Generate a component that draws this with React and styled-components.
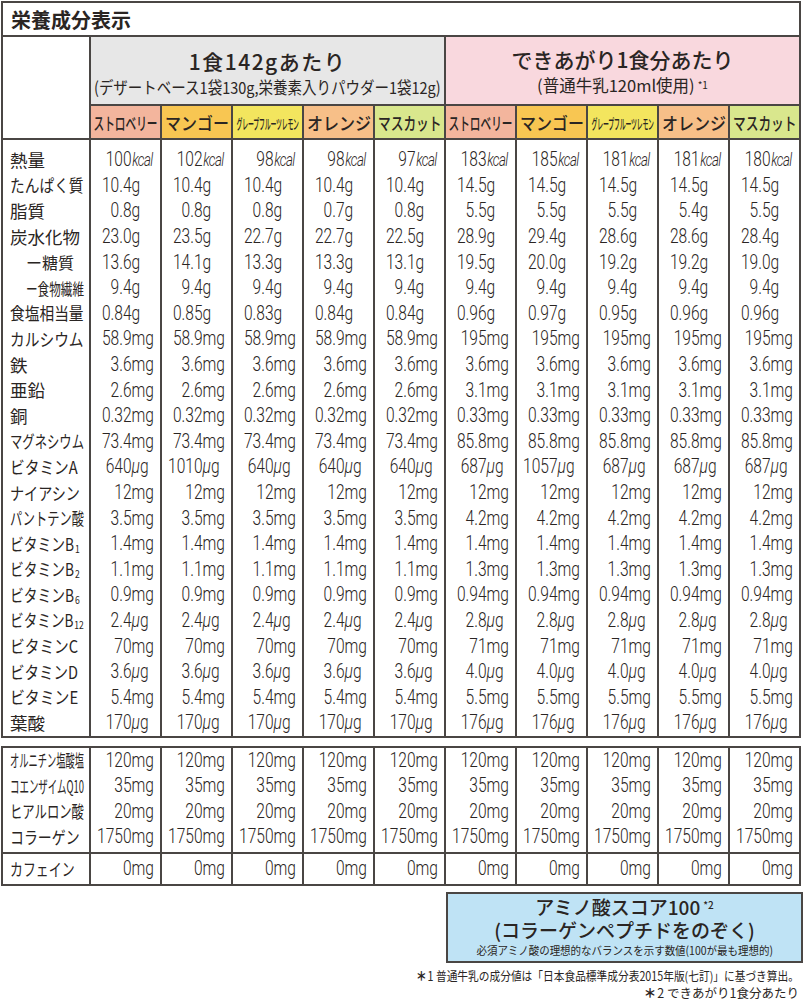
import React, { useLayoutEffect, useRef, useState } from 'react';
import styled, { createGlobalStyle } from 'styled-components';

const LINE = '#4a4644';
const INK = '#2a2523';
const FONT = `"Noto Sans CJK JP", "Noto Sans", sans-serif`;
const NUM_FONT = `Roboto, "Noto Sans", sans-serif`;

const GlobalStyle = createGlobalStyle`
  html, body { margin: 0; background: #fff; }
  body { font-family: ${FONT}; color: ${INK}; }
`;

// scale a piece of text down so it fits a given width
function Fit({ max, origin = 'left', children }) {
  const ref = useRef(null);
  const [scale, setScale] = useState(1);
  useLayoutEffect(() => {
    const measure = () => {
      const w = ref.current ? ref.current.offsetWidth : 0;
      setScale(w > max ? max / w : 1);
    };
    measure();
    if (document.fonts) document.fonts.ready.then(measure);
  }, [max]);
  return (
    <FitBox ref={ref} $origin={origin} style={{ transform: `scaleX(${scale})` }}>
      {children}
    </FitBox>
  );
}

const rep = (a, b) => [...Array(5).fill(a), ...Array(5).fill(b)];

const flavors = [
  { name: 'ストロベリー', color: '#f3b59d' },
  { name: 'マンゴー', color: '#f8c652' },
  { name: 'グレープフルーツレモン', color: '#f3e55e', small: true },
  { name: 'オレンジ', color: '#f7bf88' },
  { name: 'マスカット', color: '#d9e78d' },
];

const mainRows = [
  { label: '熱量', unit: 'kcal', v: ['100', '102', '98', '98', '97', '183', '185', '181', '181', '180'] },
  { label: 'たんぱく質', unit: 'g', v: rep('10.4', '14.5') },
  { label: '脂質', unit: 'g', v: ['0.8', '0.8', '0.8', '0.7', '0.8', '5.5', '5.5', '5.5', '5.4', '5.5'] },
  { label: '炭水化物', unit: 'g', v: ['23.0', '23.5', '22.7', '22.7', '22.5', '28.9', '29.4', '28.6', '28.6', '28.4'] },
  { label: 'ー糖質', indent: true, unit: 'g', v: ['13.6', '14.1', '13.3', '13.3', '13.1', '19.5', '20.0', '19.2', '19.2', '19.0'] },
  { label: 'ー食物繊維', indent: true, unit: 'g', v: rep('9.4', '9.4') },
  { label: '食塩相当量', unit: 'g', v: ['0.84', '0.85', '0.83', '0.84', '0.84', '0.96', '0.97', '0.95', '0.96', '0.96'] },
  { label: 'カルシウム', unit: 'mg', v: rep('58.9', '195') },
  { label: '鉄', unit: 'mg', v: rep('3.6', '3.6') },
  { label: '亜鉛', unit: 'mg', v: rep('2.6', '3.1') },
  { label: '銅', unit: 'mg', v: rep('0.32', '0.33') },
  { label: 'マグネシウム', unit: 'mg', v: rep('73.4', '85.8') },
  { label: 'ビタミンA', unit: 'ug', w: 68, v: ['640', '1010', '640', '640', '640', '687', '1057', '687', '687', '687'] },
  { label: 'ナイアシン', unit: 'mg', w: 70, v: rep('12', '12') },
  { label: 'パントテン酸', unit: 'mg', v: rep('3.5', '4.2') },
  { label: 'ビタミンB', sub: '1', unit: 'mg', w: 70, v: rep('1.4', '1.4') },
  { label: 'ビタミンB', sub: '2', unit: 'mg', w: 70, v: rep('1.1', '1.3') },
  { label: 'ビタミンB', sub: '6', unit: 'mg', w: 70, v: rep('0.9', '0.94') },
  { label: 'ビタミンB', sub: '12', unit: 'ug', w: 74, v: rep('2.4', '2.8') },
  { label: 'ビタミンC', unit: 'mg', w: 68, v: rep('70', '71') },
  { label: 'ビタミンD', unit: 'ug', w: 68, v: rep('3.6', '4.0') },
  { label: 'ビタミンE', unit: 'mg', w: 68, v: rep('5.4', '5.5') },
  { label: '葉酸', unit: 'ug', v: rep('170', '176') },
];

const extraRows = [
  { label: 'オルニチン塩酸塩', unit: 'mg', v: rep('120', '120') },
  { label: 'コエンザイムQ10', unit: 'mg', v: rep('35', '35') },
  { label: 'ヒアルロン酸', unit: 'mg', v: rep('20', '20') },
  { label: 'コラーゲン', unit: 'mg', w: 70, v: rep('1750', '1750') },
];

const caffeineRows = [{ label: 'カフェイン', unit: 'mg', w: 65, v: rep('0', '0') }];

function UnitText({ unit }) {
  if (unit === 'kcal') return <Kcal>kcal</Kcal>;
  if (unit === 'ug') return <Unit><Mu>μ</Mu>g</Unit>;
  return <Unit>{unit}</Unit>;
}

function Block({ rows, rowH, pt, pb, top }) {
  return (
    <Section $top={top}>
      <LabelColumn $pt={pt} $pb={pb}>
        {rows.map((r, i) => (
          <LabelCell key={i} $h={rowH} $indent={r.indent}>
            <Fit max={r.w || (r.indent ? 58 : 74)}>
              <LabelText $indent={r.indent}>
                {r.label}
                {r.sub && <Sub>{r.sub}</Sub>}
              </LabelText>
            </Fit>
          </LabelCell>
        ))}
      </LabelColumn>
      {Array.from({ length: 10 }, (_, c) => (
        <ValueColumn key={c} $pt={pt} $pb={pb}>
          {rows.map((r, i) => (
            <ValueCell key={i} $h={rowH}>
              <ValueText>
                <Num>{r.v[c]}</Num>
                <UnitText unit={r.unit} />
              </ValueText>
            </ValueCell>
          ))}
        </ValueColumn>
      ))}
    </Section>
  );
}

function FlavorStrip() {
  return (
    <FlavorRow>
      {flavors.map((f) => (
        <FlavorCell key={f.name} $bg={f.color}>
          <Fit max={f.small ? 62 : 64} origin="center">
            <FlavorText $small={f.small}>{f.name}</FlavorText>
          </Fit>
        </FlavorCell>
      ))}
    </FlavorRow>
  );
}

export default function App() {
  return (
    <Page>
      <GlobalStyle />
      <Frame>
        <TitleBar>栄養成分表示</TitleBar>
        <HeaderRow>
          <Corner />
          <Group>
            <GroupTitle $bg="#e7e7e7" $pt={10}>
              <GroupMain $spacing={1.5}>1食142gあたり</GroupMain>
              <GroupSub>
                <Fit max={347} origin="center">
                  (デザートベース1袋130g,栄養素入りパウダー1袋12g)
                </Fit>
              </GroupSub>
            </GroupTitle>
            <FlavorStrip />
          </Group>
          <Group>
            <GroupTitle $bg="#f9d8de" $pt={8}>
              <GroupMain $spacing={0}>できあがり1食分あたり</GroupMain>
              <GroupSub>
                (普通牛乳120ml使用)<Star $lift={3}>*1</Star>
              </GroupSub>
            </GroupTitle>
            <FlavorStrip />
          </Group>
        </HeaderRow>
        <Block rows={mainRows} rowH={25.6} pt={7} pb={0} />
      </Frame>
      <Frame $gap>
        <Block rows={extraRows} rowH={25.5} pt={0} pb={2} />
        <Block rows={caffeineRows} rowH={30} pt={0} pb={0} top />
      </Frame>
      <AminoBox>
        <AminoMain>
          アミノ酸スコア100<Star $lift={6}>*2</Star>
        </AminoMain>
        <AminoMain>(コラーゲンペプチドをのぞく)</AminoMain>
        <AminoNote>
          <Fit max={296} origin="center">
            必須アミノ酸の理想的なバランスを示す数値(100が最も理想的)
          </Fit>
        </AminoNote>
      </AminoBox>
      <Notes>
        <NoteLine>
          <Fit max={383} origin="right">
            <Mark>＊</Mark>1 普通牛乳の成分値は「日本食品標準成分表2015年版(七訂)」に基づき算出。
          </Fit>
        </NoteLine>
        <NoteLine>
          <Mark>＊</Mark>2 できあがり1食分あたり
        </NoteLine>
      </Notes>
    </Page>
  );
}

const FitBox = styled.span`
  display: inline-block;
  white-space: nowrap;
  flex-shrink: 0;
  transform-origin: ${({ $origin }) => $origin} center;
`;

const Page = styled.div`
  width: 803px;
  box-sizing: border-box;
  padding: 1px 0 0 1px;
`;

const Frame = styled.div`
  width: 800px;
  box-sizing: border-box;
  border: 2px solid ${LINE};
  margin-top: ${({ $gap }) => ($gap ? '8px' : '0')};
`;

const TitleBar = styled.div`
  height: 32px;
  display: flex;
  align-items: center;
  padding-left: 8px;
  border-bottom: 2px solid ${LINE};
  font-size: 20px;
  font-weight: 700;
`;

const HeaderRow = styled.div`
  display: flex;
  border-bottom: 2px solid ${LINE};
`;

const Corner = styled.div`
  width: 86px;
  flex-shrink: 0;
`;

const Group = styled.div`
  width: 355px;
  display: flex;
  flex-direction: column;
`;

const GroupTitle = styled.div`
  height: 67px;
  box-sizing: border-box;
  padding-top: ${({ $pt }) => $pt}px;
  border-left: 2px solid ${LINE};
  background: ${({ $bg }) => $bg};
  display: flex;
  flex-direction: column;
  align-items: center;
`;

const GroupMain = styled.div`
  font-size: 21px;
  font-weight: 500;
  line-height: 28px;
  letter-spacing: ${({ $spacing }) => $spacing}px;
`;

const GroupSub = styled.div`
  font-size: 16.5px;
  line-height: 24px;
  display: flex;
  justify-content: center;
  align-items: baseline;
  width: 100%;
`;

const Star = styled.span`
  font-size: 10px;
  line-height: 1;
  position: relative;
  top: -${({ $lift }) => $lift}px;
  margin-left: 3px;
`;

const FlavorRow = styled.div`
  display: flex;
  border-top: 2px solid ${LINE};
`;

const FlavorCell = styled.div`
  width: 71px;
  height: 32px;
  box-sizing: border-box;
  border-left: 2px solid ${LINE};
  background: ${({ $bg }) => $bg};
  display: flex;
  align-items: center;
  justify-content: center;
  overflow: hidden;
`;

const FlavorText = styled.span`
  font-size: ${({ $small }) => ($small ? '14px' : '17.5px')};
  font-weight: 500;
  letter-spacing: ${({ $small }) => ($small ? '-0.5px' : '0')};
`;

const Section = styled.div`
  display: flex;
  border-top: ${({ $top }) => ($top ? `2px solid ${LINE}` : 'none')};
`;

const LabelColumn = styled.div`
  width: 86px;
  flex-shrink: 0;
  box-sizing: border-box;
  padding: ${({ $pt }) => $pt}px 0 ${({ $pb }) => $pb}px;
`;

const LabelCell = styled.div`
  height: ${({ $h }) => $h}px;
  display: flex;
  align-items: center;
  padding-left: ${({ $indent }) => ($indent ? '23px' : '7px')};
`;

const LabelText = styled.span`
  font-size: ${({ $indent }) => ($indent ? '16px' : '17.5px')};
  line-height: 1;
`;

const Sub = styled.span`
  font-size: 11px;
  vertical-align: -2px;
  margin-left: 1px;
`;

const ValueColumn = styled.div`
  width: 71px;
  flex-shrink: 0;
  box-sizing: border-box;
  border-left: 2px solid ${LINE};
  padding: ${({ $pt }) => $pt}px 0 ${({ $pb }) => $pb}px;
`;

const ValueCell = styled.div`
  height: ${({ $h }) => $h}px;
  display: flex;
  align-items: center;
  padding-left: 5px;
`;

const ValueText = styled.span`
  display: inline-flex;
  align-items: baseline;
  white-space: nowrap;
  font-family: ${NUM_FONT};
  font-size: 21px;
  font-weight: 300;
  line-height: 1;
  transform: scaleX(0.74);
  transform-origin: left center;
`;

const Num = styled.span`
  width: 48px;
  flex-shrink: 0;
  text-align: right;
`;

const Unit = styled.span``;

const Mu = styled.span`
  font-style: italic;
`;

const Kcal = styled.span`
  font-style: italic;
  font-size: 18px;
  letter-spacing: -0.8px;
  margin-left: 1px;
`;

const AminoBox = styled.div`
  width: 357px;
  height: 71px;
  box-sizing: border-box;
  margin: 6px 0 0 auto;
  border: 2px solid ${LINE};
  background: #bfe3f5;
  display: flex;
  flex-direction: column;
  align-items: center;
  justify-content: center;
`;

const AminoMain = styled.div`
  font-size: 19px;
  font-weight: 500;
  line-height: 23px;
`;

const AminoNote = styled.div`
  font-size: 11.5px;
  line-height: 19px;
  display: flex;
  justify-content: center;
  width: 100%;
`;

const Notes = styled.div`
  margin-top: 4px;
  padding-right: 4px;
  display: flex;
  flex-direction: column;
  align-items: flex-end;
`;

const NoteLine = styled.div`
  font-size: 12.5px;
  line-height: 17px;
  white-space: nowrap;
  display: flex;
  justify-content: flex-end;
`;

const Mark = styled.span`
  font-weight: 900;
  margin-right: 1px;
`;
